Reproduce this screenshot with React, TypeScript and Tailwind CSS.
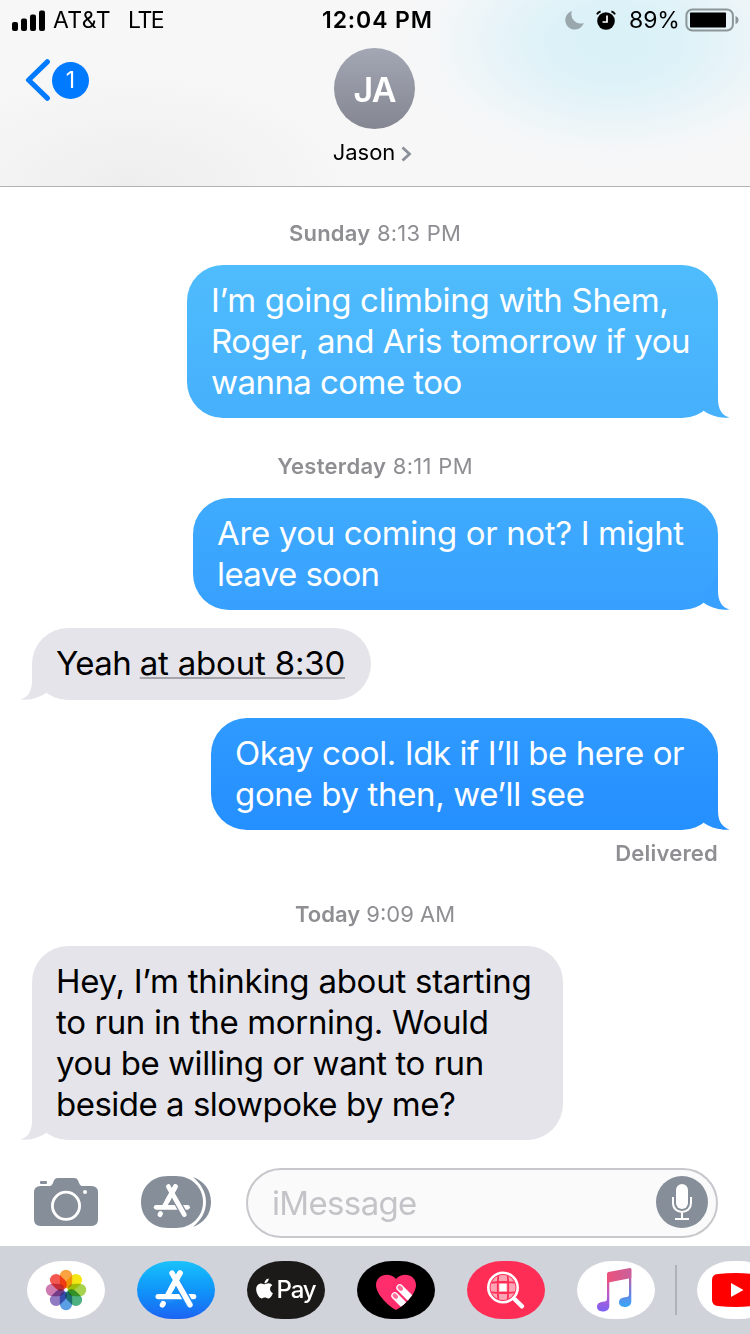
import React from "react";
import { FaApple } from "react-icons/fa";

type LineSpec = { text: React.ReactNode; tracking: string };

function Stamp({ day, time, className }: { day: string; time: string; className: string }) {
  return (
    <div className={`flex h-7 items-center justify-center text-[22px] text-[#8e8e93] ${className}`}>
      <span className="whitespace-pre">
        <b className="font-semibold">{day}</b> {time}
      </span>
    </div>
  );
}

function Bubble({ lines, mine, className, tail }: { lines: LineSpec[]; mine?: boolean; className: string; tail: string }) {
  return (
    <div
      className={`relative rounded-[36px] px-6 py-[15px] text-[33px] leading-[41px] ${
        mine ? "mr-8 self-end text-white" : "ml-8 self-start text-black"
      } ${className}`}
    >
      {lines.map((l, i) => (
        <div key={i} className={`whitespace-pre ${l.tracking}`}>
          {l.text}
        </div>
      ))}
      <svg
        viewBox="0 0 30 38"
        className={`absolute bottom-0 h-[38px] w-[30px] ${mine ? "-right-3" : "-left-3 -scale-x-100"}`}
      >
        <path d="M18 1V19C18 29 22 35.5 29.5 37.4C19 38.5 11 35.5 4 31L3 29L16 4Z" fill={tail} />
      </svg>
    </div>
  );
}

function StoreGlyph({ bg }: { bg: string }) {
  return (
    <g fill="none" stroke="#fff" strokeWidth="5.4" strokeLinecap="round">
      <path d="M21.2 35.6H56.6" />
      <path d="M43 12.2L31 33.5" />
      <path d="M40.5 22L53.3 44.3" stroke={bg} strokeWidth="8.2" strokeLinecap="butt" />
      <path d="M22 40.2H36" stroke={bg} strokeWidth="2.2" strokeLinecap="butt" />
      <path d="M43 12.2L34 28" />
      <path d="M35 12.2L53 43.8" />
      <path d="M26.2 42.6L25.4 44" />
    </g>
  );
}

function Pill({ className, children }: { className: string; children?: React.ReactNode }) {
  return (
    <div
      className={`flex h-[58px] w-[78px] shrink-0 items-center overflow-hidden [border-radius:35px/29px] ${className}`}
    >
      {children}
    </div>
  );
}

const petals = ["#fa9f38", "#f5e60c", "#a3d045", "#46ad7c", "#559ae2", "#8c74c0", "#cb76ae", "#f4524a"];

function StatusBar() {
  return (
    <div className="flex h-10 items-center text-[23px] text-black">
      <svg viewBox="0 0 34 21" className="ml-3 h-[21px] w-[34px]">
        <rect x="0" y="12" width="6" height="9" rx="2" />
        <rect x="9" y="8.5" width="6" height="12.5" rx="2" />
        <rect x="18" y="4.5" width="6" height="16.5" rx="2" />
        <rect x="27" y="0.5" width="6" height="20.5" rx="2" />
      </svg>
      <span className="ml-[7px] w-[75px] pt-px tracking-[0.4px]">AT&amp;T</span>
      <span className="w-[194px] pt-px tracking-[-1.4px]">LTE</span>
      <span className="w-[242px] pt-px font-semibold tracking-[0.9px]">12:04 PM</span>
      <svg viewBox="0 0 20 20" className="ml-px h-5 w-5">
        <path d="M7 1A9.5 9.5 0 1 0 18.8 13A9.3 9.3 0 0 1 7 1Z" fill="#9aa7ad" />
      </svg>
      <svg viewBox="0 0 20 20" className="ml-[11px] h-5 w-5">
        <circle cx="10" cy="11" r="8.8" />
        <path d="M1 4.4Q2 2 4.6 1.5M19 4.4Q18 2 15.4 1.5" fill="none" stroke="#000" strokeWidth="2" />
        <path d="M11 5.5V12H6.5" fill="none" stroke="#fff" strokeWidth="1.7" />
      </svg>
      <span className="ml-[13px] w-[56px] pt-px tracking-[-0.1px]">89%</span>
      <svg viewBox="0 0 54 24" className="h-6 w-[54px]">
        <rect x="1.4" y="1.5" width="46.5" height="21" rx="6" fill="none" stroke="#8b9699" strokeWidth="2" />
        <rect x="5" y="4.5" width="36" height="15" rx="0.8" />
        <path d="M50.5 8Q53.5 9 53.5 12Q53.5 15 50.5 16Z" fill="#8b9699" />
      </svg>
    </div>
  );
}

function Header() {
  return (
    <header className="flex h-[187px] flex-col border-b border-[#b2b2b4] bg-[#f7f7f8] [background-image:radial-gradient(ellipse_210px_125px_at_615px_42px,#daf1f8_0%,#dcf2f8_30%,#e9f4f8_60%,#f4f7f8_85%,transparent_100%),radial-gradient(ellipse_230px_120px_at_130px_187px,#eeeeef_0%,transparent_100%)]">
      <StatusBar />
      <div className="flex items-start">
        <div className="flex w-[334px] items-center pt-[19px] pl-[25px]">
          <svg viewBox="0 0 26 42" className="h-[42px] w-[26px]">
            <path d="M22.3 2.8L3.6 21L22.3 39.2" fill="none" stroke="#007aff" strokeWidth="5.2" strokeLinecap="round" strokeLinejoin="round" />
          </svg>
          <div className="ml-px flex h-[37px] w-[37px] items-center justify-center rounded-full bg-[#007aff] pt-px text-[23px] text-white">1</div>
        </div>
        <div className="flex w-[81px] flex-col items-center pt-2">
          <div className="flex h-[81px] w-[81px] items-center justify-center rounded-full bg-linear-to-b from-[#a3a7b4] to-[#848791] pt-0.5 text-[34px] font-semibold tracking-[-0.8px] text-white">
            JA
          </div>
          <div className="mt-2 mr-1 flex h-[30px] items-center text-[22px] tracking-[-0.05px] whitespace-nowrap text-black">
            Jason
            <svg viewBox="0 0 12 18" className="mt-[3px] ml-[5px] h-[18px] w-3">
              <path d="M2.5 2.5L9.5 9L2.5 15.5" fill="none" stroke="#8a8f99" strokeWidth="2.8" />
            </svg>
          </div>
        </div>
      </div>
    </header>
  );
}

function Composer() {
  return (
    <div className="flex h-[106px] items-start pt-7">
      <svg viewBox="0 0 64 50" className="mt-[9px] ml-[34px] h-[50px] w-16">
        <path d="M6.5 9H15C18 9 18.5 7 19.5 4.5C20.5 2 21.5 1 24 1H40C42.5 1 43.5 2 44.5 4.5C45.5 7 46 9 49 9H57.5Q64 9 64 15.5V42.5Q64 49 57.5 49H6.5Q0 49 0 42.5V15.5Q0 9 6.5 9Z" fill="#868e99" />
        <rect x="6" y="4" width="7" height="3" rx="1" fill="#868e99" />
        <circle cx="32" cy="28.8" r="13.6" fill="none" stroke="#fff" strokeWidth="2.8" />
        <circle cx="51" cy="15" r="2" fill="#fff" />
      </svg>
      <svg viewBox="0 0 70 52" className="mt-2 ml-[43px] h-[52px] w-[70px]">
        <path d="M52 1C63 5 70 14 70 26S63 47 52 51C60 44 65 36 65 26S60 8 52 1Z" fill="#868e99" />
        <path d="M27 0H35C50 0 62 11 62 26S50 52 35 52H27C11 52 0 41 0 26S11 0 27 0Z" fill="#868e99" />
        <g transform="translate(-3.6 -.2) scale(.885)">
          <StoreGlyph bg="#868e99" />
        </g>
      </svg>
      <div className="ml-[35px] flex h-[70px] w-[472px] items-center justify-between rounded-full border-2 border-[#c7c7cc] bg-[#fafafb] pr-2 pl-6 text-[33px] text-[#c4c4c8]">
        <span className="pt-0.5 tracking-[-0.65px]">iMessage</span>
        <svg viewBox="0 0 52 52" className="-mt-0.5 h-[52px] w-[52px]">
          <circle cx="26" cy="26" r="26" fill="#868e99" />
          <rect x="20" y="8" width="12" height="25" rx="6" fill="#fff" />
          <path d="M17 21V27C17 32.5 21 36 26 36S35 32.5 35 27V21M26 36V43M19 43H33" fill="none" stroke="#fff" strokeWidth="2" />
        </svg>
      </div>
    </div>
  );
}

function Dock() {
  return (
    <div className="flex h-[88px] items-start gap-8 overflow-hidden bg-[#d1d3da] pt-[15px] pl-[27px]">
      <Pill className="justify-center bg-white">
        <svg viewBox="-21 -21 42 42" className="h-[42px] w-[42px] overflow-visible">
          <g className="isolate">
            {petals.map((c, i) => (
              <rect key={c} x="-6.2" y="-20.2" width="12.4" height="18.6" rx="6.2" fill={c} opacity="0.96" transform={`rotate(${i * 45})`} className="mix-blend-multiply" />
            ))}
          </g>
          <circle r="1.4" fill="#fff" />
        </svg>
      </Pill>
      <Pill className="justify-center bg-linear-to-b from-[#1cc2fc] to-[#1d63f3]">
        <svg viewBox="0 0 78 58" className="h-[58px] w-[78px]">
          <StoreGlyph bg="#1d8cf7" />
        </svg>
      </Pill>
      <Pill className="justify-center bg-[#1b1a19] text-white">
        <FaApple className="mr-[3px] -mt-1 h-[23px] w-[17px]" />
        <span className="text-[24px] font-medium tracking-[-1.1px]">Pay</span>
      </Pill>
      <Pill className="justify-center bg-black">
        <svg viewBox="0 0 78 58" className="h-[58px] w-[78px]">
          <defs>
            <clipPath id="heart">
              <path d="M39 49C33 46 19 34 19 24C19 14 32 10 39 18C46 10 59 14 59 24C59 34 45 46 39 49Z" />
            </clipPath>
          </defs>
          <g clipPath="url(#heart)">
            <rect width="78" height="58" fill="#ff2d6c" />
            <path d="M42.8 26.8L60 44M37.8 34.8L54 51" stroke="#fff" strokeWidth="7" strokeLinecap="round" />
            <path d="M42.6 26.4L44 27.8M37.6 34.4L39 35.8" stroke="#ff6d98" strokeWidth="4.2" strokeLinecap="round" />
          </g>
        </svg>
      </Pill>
      <Pill className="justify-center bg-[#fe2d55]">
        <svg viewBox="0 0 78 58" className="h-[58px] w-[78px]">
          <defs>
            <clipPath id="lens">
              <circle cx="36" cy="26.5" r="12.5" />
            </clipPath>
          </defs>
          <g clipPath="url(#lens)">
            <rect x="22" y="12" width="29" height="29" fill="#ffa5b6" />
            <rect x="32.5" y="23" width="7" height="7" fill="#fff" />
            <path d="M31.5 12Q30 26 31.5 41M40.5 12Q42 26 40.5 41M22 22Q36 20 50 22M22 31Q36 33 50 31" fill="none" stroke="#fe2d55" strokeWidth="1.8" />
          </g>
          <circle cx="36" cy="26.5" r="14.7" fill="none" stroke="#fff" strokeWidth="2.6" />
          <path d="M47 37.5L55 45.3" stroke="#fff" strokeWidth="4.4" strokeLinecap="round" />
        </svg>
      </Pill>
      <Pill className="justify-center bg-white">
        <svg viewBox="0 0 78 58" className="h-[58px] w-[78px]">
          <defs>
            <linearGradient id="stemL" x1="0" y1="0" x2="0" y2="1">
              <stop offset="0.1" stopColor="#e9527f" />
              <stop offset="0.6" stopColor="#b65bcf" />
              <stop offset="1" stopColor="#7c62f5" />
            </linearGradient>
            <linearGradient id="stemR" x1="0" y1="0" x2="0" y2="1">
              <stop offset="0.1" stopColor="#d75890" />
              <stop offset="0.6" stopColor="#6f7ddd" />
              <stop offset="1" stopColor="#37a9fa" />
            </linearGradient>
            <linearGradient id="beam">
              <stop offset="0" stopColor="#ec507a" />
              <stop offset="1" stopColor="#c9609c" />
            </linearGradient>
          </defs>
          <path d="M30 13L32.3 11V45C32.3 49 29 50.5 25.6 50.5C22 50.5 20 48.5 20 45.8C20 42.5 22.5 41 26 40.7C29 40.5 30 40 30 37Z" fill="url(#stemL)" />
          <path d="M52 8.5L54.3 8V40.5C54.3 44.5 51 46 47.6 46C44 46 42 44 42 41.3C42 38 44.5 36.5 48 36.2C51 36 52 35.5 52 32.5Z" fill="url(#stemR)" />
          <path d="M30 13Q30 11.4 31.6 11L52.8 6.9Q54.3 6.7 54.3 8.3V17L30 21.8Z" fill="url(#beam)" />
        </svg>
      </Pill>
      <div className="mt-1 -mr-3 -ml-3 h-[50px] w-0.5 shrink-0 bg-[#b0b2ba]" />
      <Pill className="justify-start bg-white pl-[15px]">
        <svg viewBox="0 0 48 34" className="h-[34px] w-12 shrink-0">
          <path d="M6 1Q24-.8 42 1Q48 1.5 48 7V27Q48 32.5 42 33Q24 34.8 6 33Q0 32.5 0 27V7Q0 1.5 6 1Z" fill="#fe0000" />
          <path d="M19 10V24L31.5 17Z" fill="#fff" />
        </svg>
      </Pill>
    </div>
  );
}

export default function App() {
  return (
    <div className="flex h-[1334px] w-[750px] flex-col overflow-hidden bg-white font-['Inter','Liberation_Sans',sans-serif]">
      <Header />
      <main className="flex flex-col">
        <Stamp day="Sunday" time="8:13 PM" className="mt-8 tracking-[0.22px]" />
        <Bubble
          mine
          className="mt-[18px] w-[531px] bg-linear-to-b from-[#4fbcfd] to-[#46b0fc]"
          tail="#47b1fc"
          lines={[
            { text: "I’m going climbing with Shem,", tracking: "tracking-[-0.29px]" },
            { text: "Roger, and Aris tomorrow if you", tracking: "tracking-[-0.45px]" },
            { text: "wanna come too", tracking: "tracking-[-0.55px]" },
          ]}
        />
        <Stamp day="Yesterday" time="8:11 PM" className="mt-[34px] tracking-[0.3px]" />
        <Bubble
          mine
          className="mt-[18px] w-[525px] bg-linear-to-b from-[#3fabfd] to-[#37a0ff]"
          tail="#38a1ff"
          lines={[
            { text: "Are you coming or not? I might", tracking: "tracking-[-0.36px]" },
            { text: "leave soon", tracking: "tracking-[-0.6px]" },
          ]}
        />
        <Bubble
          className="mt-[18px] h-[72px] w-[339px] bg-[#e5e4ea]"
          tail="#e5e4ea"
          lines={[
            {
              text: (
                <>
                  Yeah{" "}
                  <span className="tracking-[-0.2px] underline decoration-[#a5a4ab] decoration-2 underline-offset-[2px] [text-decoration-skip-ink:none]">
                    at about 8:30
                  </span>
                </>
              ),
              tracking: "tracking-[-0.6px]",
            },
          ]}
        />
        <Bubble
          mine
          className="mt-[18px] w-[507px] bg-linear-to-b from-[#2f9aff] to-[#248fff]"
          tail="#2691ff"
          lines={[
            { text: "Okay cool. Idk if I’ll be here or", tracking: "tracking-[-0.43px]" },
            { text: "gone by then, we’ll see", tracking: "tracking-[-0.36px]" },
          ]}
        />
        <div className="mt-[9px] mr-8 flex h-7 items-center self-end text-[22px] font-semibold tracking-[0.2px] text-[#8e8e93]">
          Delivered
        </div>
        <Stamp day="Today" time="9:09 AM" className="mt-[33px]" />
        <Bubble
          className="mt-[18px] w-[531px] bg-[#e5e4ea]"
          tail="#e5e4ea"
          lines={[
            { text: "Hey, I’m thinking about starting", tracking: "tracking-[-0.25px]" },
            { text: "to run in the morning. Would", tracking: "tracking-[-0.33px]" },
            { text: "you be willing or want to run", tracking: "tracking-[-0.45px]" },
            { text: "beside a slowpoke by me?", tracking: "tracking-[-0.5px]" },
          ]}
        />
      </main>
      <Composer />
      <Dock />
    </div>
  );
}
